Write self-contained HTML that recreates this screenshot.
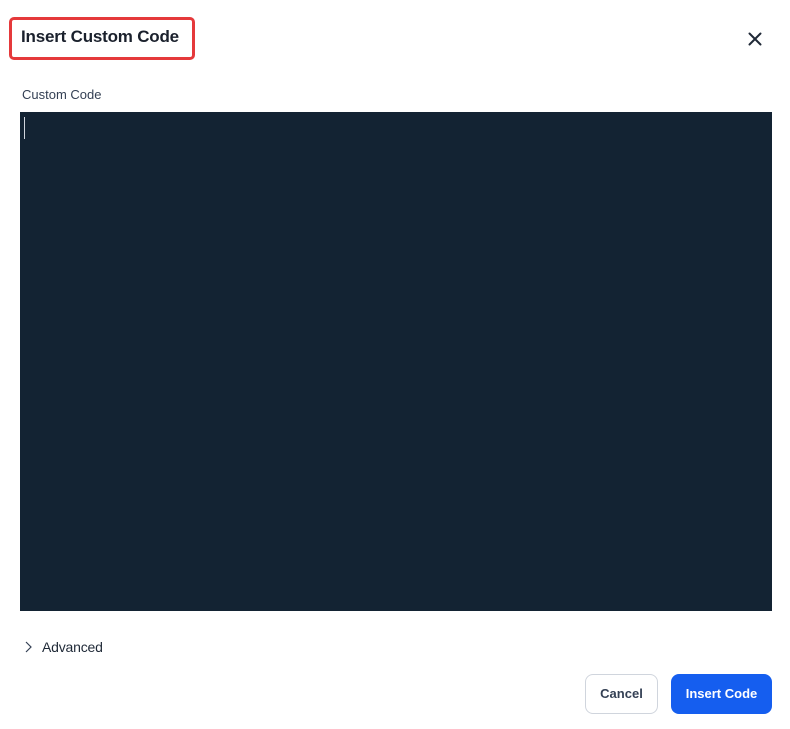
<!DOCTYPE html>
<html><head><style>
body{margin:0;width:790px;height:729px;background:#fff;font-family:"Liberation Sans",sans-serif;position:relative;overflow:hidden}
.a{position:absolute}
</style></head><body>
<div class="a" style="left:9px;top:17px;width:180px;height:37px;border:3px solid #e5393b;border-radius:5px"></div>
<div class="a" style="left:21px;top:27px;font-size:17px;font-weight:bold;color:#1a202c;letter-spacing:-0.2px">Insert Custom Code</div>
<svg class="a" style="left:748px;top:32px" width="14" height="14" viewBox="0 0 14 14"><path d="M1.5 1.5L12.5 12.5M12.5 1.5L1.5 12.5" stroke="#1f2937" stroke-width="2" stroke-linecap="round"/></svg>
<div class="a" style="left:22px;top:87px;font-size:13px;color:#344054">Custom Code</div>
<div class="a" style="left:20px;top:112px;width:752px;height:499px;background:#132333"></div>
<div class="a" style="left:24px;top:117px;width:1px;height:22px;background:#d0d5dd"></div>
<svg class="a" style="left:23px;top:641px" width="10" height="12" viewBox="0 0 10 12"><path d="M3 1L8 6L3 11" stroke="#344054" stroke-width="1.2" fill="none"/></svg>
<div class="a" style="left:42px;top:639px;font-size:14px;color:#1f2937;letter-spacing:-0.2px">Advanced</div>
<div class="a" style="left:585px;top:674px;width:71px;height:38px;border:1px solid #d0d5dd;border-radius:8px;font-size:13px;font-weight:bold;color:#344054;text-align:center;line-height:38px">Cancel</div>
<div class="a" style="left:671px;top:674px;width:101px;height:40px;background:#155eef;border-radius:8px;font-size:13px;font-weight:bold;color:#fff;text-align:center;line-height:40px">Insert Code</div>
</body></html>
